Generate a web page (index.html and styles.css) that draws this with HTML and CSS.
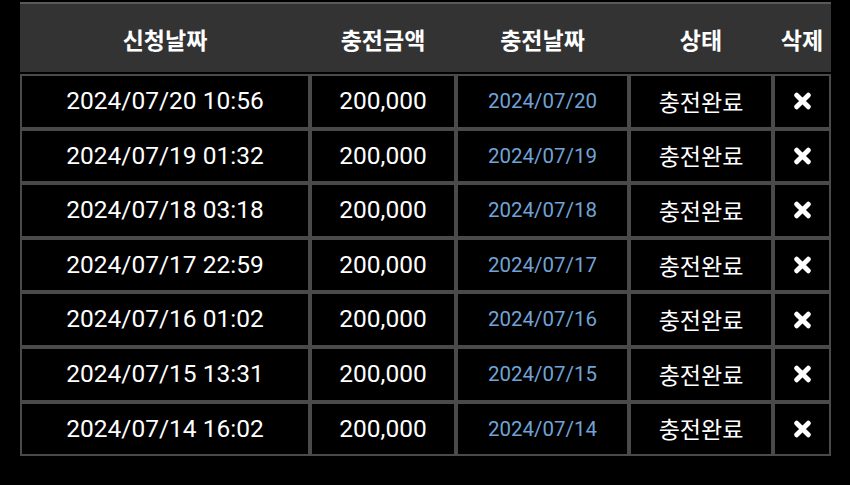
FILE: index.html
```html
<!DOCTYPE html>
<html lang="ko">
<head>
<meta charset="utf-8">
<link rel="stylesheet" href="styles.css">
</head>
<body>
<table class="list">
  <colgroup>
    <col class="c-req"><col class="c-amt"><col class="c-date"><col class="c-state"><col class="c-del">
  </colgroup>
  <thead>
    <tr><th>신청날짜</th><th>충전금액</th><th>충전날짜</th><th>상태</th><th>삭제</th></tr>
  </thead>
  <tbody>
    <tr><td>2024/07/20 10:56</td><td>200,000</td><td class="dt">2024/07/20</td><td class="st">충전완료</td><td><svg class="x" viewBox="0 0 18 17"><path d="M3.5 3 L14.5 14 M14.5 3 L3.5 14"/></svg></td></tr>
    <tr><td>2024/07/19 01:32</td><td>200,000</td><td class="dt">2024/07/19</td><td class="st">충전완료</td><td><svg class="x" viewBox="0 0 18 17"><path d="M3.5 3 L14.5 14 M14.5 3 L3.5 14"/></svg></td></tr>
    <tr><td>2024/07/18 03:18</td><td>200,000</td><td class="dt">2024/07/18</td><td class="st">충전완료</td><td><svg class="x" viewBox="0 0 18 17"><path d="M3.5 3 L14.5 14 M14.5 3 L3.5 14"/></svg></td></tr>
    <tr><td>2024/07/17 22:59</td><td>200,000</td><td class="dt">2024/07/17</td><td class="st">충전완료</td><td><svg class="x" viewBox="0 0 18 17"><path d="M3.5 3 L14.5 14 M14.5 3 L3.5 14"/></svg></td></tr>
    <tr><td>2024/07/16 01:02</td><td>200,000</td><td class="dt">2024/07/16</td><td class="st">충전완료</td><td><svg class="x" viewBox="0 0 18 17"><path d="M3.5 3 L14.5 14 M14.5 3 L3.5 14"/></svg></td></tr>
    <tr><td>2024/07/15 13:31</td><td>200,000</td><td class="dt">2024/07/15</td><td class="st">충전완료</td><td><svg class="x" viewBox="0 0 18 17"><path d="M3.5 3 L14.5 14 M14.5 3 L3.5 14"/></svg></td></tr>
    <tr><td>2024/07/14 16:02</td><td>200,000</td><td class="dt">2024/07/14</td><td class="st">충전완료</td><td><svg class="x" viewBox="0 0 18 17"><path d="M3.5 3 L14.5 14 M14.5 3 L3.5 14"/></svg></td></tr>
  </tbody>
</table>
</body>
</html>
```
FILE: styles.css
```css
html, body {
  margin: 0;
  background: #000;
}
body {
  padding: 2px 0 0 20px;
  font-family: Roboto, "Noto Sans CJK KR", sans-serif;
  color: #fff;
}
.list {
  width: 811px;
  table-layout: fixed;
  border-collapse: separate;
  border-spacing: 0;
}
.c-req { width: 290px; }
.c-amt { width: 146px; }
.c-date { width: 173px; }
.c-state { width: 144px; }
.c-del { width: 58px; }
.list th {
  height: 72px;
  box-sizing: border-box;
  padding: 1px 0 0 0;
  background: #333333;
  border-top: 2px solid #595959;
  border-bottom: 2px solid #000;
  font-family: "Noto Sans CJK KR", sans-serif;
  font-weight: 700;
  font-size: 23px;
  text-align: center;
  vertical-align: middle;
}
.list td {
  height: 54.6px;
  box-sizing: border-box;
  padding: 0;
  border: 2px solid #4a4a4a;
  text-align: center;
  vertical-align: middle;
  font-size: 24.5px;
  line-height: 1;
}
.list td.dt {
  color: #72a3d6;
  font-size: 20.5px;
}
.list td.st {
  font-family: "Noto Sans CJK KR", sans-serif;
  font-size: 23px;
}
.x {
  display: block;
  margin: 0 auto;
  width: 19px;
  height: 18px;
}
.x path {
  fill: none;
  stroke: #fff;
  stroke-width: 4.6;
  stroke-linecap: round;
}
```
